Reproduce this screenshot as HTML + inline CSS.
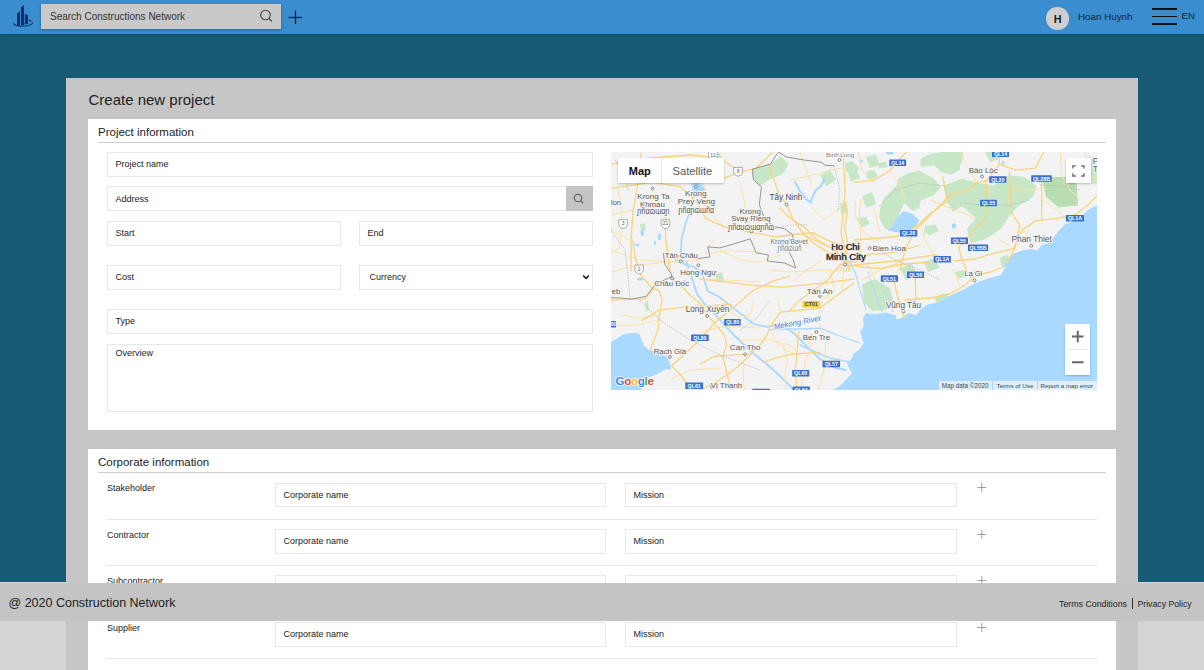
<!DOCTYPE html>
<html><head><meta charset="utf-8">
<style>
*{box-sizing:border-box;margin:0;padding:0}
html,body{width:1204px;height:670px;overflow:hidden}
body{position:relative;background:#d5d5d5;font-family:"Liberation Sans",sans-serif;color:#222}
.abs{position:absolute}
#teal{left:0;top:0;width:1204px;height:582px;background:#175a73}
#hdr{left:0;top:0;width:1204px;height:34px;background:#3a8ed0;box-shadow:0 1px 2px rgba(0,0,0,.18)}
#search{left:41px;top:4px;width:240px;height:25px;background:#c9c9c9;box-shadow:0 1px 3px rgba(0,0,0,.3)}
.t{position:absolute;white-space:nowrap;line-height:1}
#card{left:66px;top:78px;width:1072px;height:600px;background:#c6c6c6}
.sec{position:absolute;left:88px;width:1028px;background:#fff}
.inp{position:absolute;border:1px solid #e8e8e8;background:#fff}
.hl{position:absolute;height:1px;background:#cfcfcf}
.sep{position:absolute;height:1px;background:#e6e6e6}
#footer{left:0;top:583px;width:1204px;height:38px;background:#c4c4c4}
</style></head>
<body>
<div id="teal" class="abs"></div>
<div id="card" class="abs"></div>

<!-- header -->
<div id="hdr" class="abs">
  <svg class="abs" style="left:8px;top:2px" width="30" height="30" viewBox="8 2 30 30">
    <path d="M17.2 13.2 L19.9 11.6 L19.9 25.3 L17.2 25.3 Z" fill="#0c2b69"/>
    <path d="M21 7.4 L23.9 5.1 L23.9 24.9 L21 24.9 Z" fill="#0c2b69"/>
    <path d="M24.8 14.1 L27.9 15.2 L27.9 24 L24.8 24.3 Z" fill="#0c2b69"/>
    <path d="M13.2 23.4 A9.8 3.5 0 0 0 32.6 22.6" fill="none" stroke="#12357a" stroke-width="1.2"/>
    <path d="M32.6 22.6 A9.8 3.5 0 0 0 28.8 20.2" fill="none" stroke="#12357a" stroke-width="0.8"/>
    <circle cx="29.8" cy="20.5" r="0.9" fill="#12357a"/>
  </svg>
</div>
<div id="search" class="abs"></div>
<div class="t" style="left:50px;top:12px;font-size:10px;color:#333">Search Constructions Network</div>
<svg class="abs" style="left:258px;top:8px" width="16" height="16" viewBox="0 0 16 16">
  <circle cx="7.5" cy="7" r="4.8" fill="none" stroke="#444" stroke-width="1.1"/>
  <line x1="11" y1="10.5" x2="13.8" y2="13.5" stroke="#444" stroke-width="1.1"/>
</svg>
<svg class="abs" style="left:286px;top:8px" width="18" height="18" viewBox="0 0 18 18">
  <line x1="2.5" y1="9.5" x2="16" y2="9.5" stroke="#101c33" stroke-width="1.3"/>
  <line x1="9.5" y1="2.5" x2="9.5" y2="16" stroke="#101c33" stroke-width="1.3"/>
</svg>
<div class="abs" style="left:1046px;top:7px;width:22.5px;height:22.5px;border-radius:50%;background:#cfcfcf"></div>
<div class="t" style="left:1053.7px;top:13.5px;font-size:10.8px;font-weight:bold;color:#1a1a1a">H</div>
<div class="t" style="left:1078px;top:12px;font-size:9.8px;color:#0f2236">Hoan Huynh</div>
<div class="abs" style="left:1152px;top:8px;width:25px;height:1.6px;background:#111"></div>
<div class="abs" style="left:1152px;top:15.5px;width:25px;height:1.6px;background:#111"></div>
<div class="abs" style="left:1152px;top:23.2px;width:25px;height:1.6px;background:#111"></div>
<div class="t" style="left:1181.5px;top:11px;font-size:9.6px;color:#0f2236">EN</div>

<!-- title -->
<div class="t" style="left:88.5px;top:92.3px;font-size:15px;color:#222">Create new project</div>

<!-- section 1 -->
<div class="sec" style="top:118.5px;height:311.5px"></div>

<div class="t" style="left:98px;top:126.5px;font-size:11.5px;color:#222">Project information</div>
<div class="hl" style="left:98px;top:142px;width:1008px"></div>
<div class="inp" style="left:107px;top:152px;width:486px;height:25px"></div>
<div class="t" style="left:115.5px;top:160px;font-size:9px">Project name</div>
<div class="inp" style="left:107px;top:186px;width:486px;height:25px"></div>
<div class="abs" style="left:566px;top:186px;width:27px;height:25px;background:#c4c4c4"></div>
<svg class="abs" style="left:571px;top:191px" width="16" height="16" viewBox="0 0 16 16">
  <circle cx="7" cy="7" r="3.8" fill="none" stroke="#555" stroke-width="1"/>
  <line x1="9.8" y1="9.8" x2="12.2" y2="12.2" stroke="#555" stroke-width="1.1"/>
</svg>
<div class="t" style="left:115.5px;top:194.5px;font-size:9px">Address</div>
<div class="inp" style="left:107px;top:221px;width:234px;height:25px"></div>
<div class="t" style="left:115.5px;top:229px;font-size:9px">Start</div>
<div class="inp" style="left:359px;top:221px;width:234px;height:25px"></div>
<div class="t" style="left:367.5px;top:229px;font-size:9px">End</div>
<div class="inp" style="left:107px;top:265px;width:234px;height:25px"></div>
<div class="t" style="left:115.5px;top:273px;font-size:9px">Cost</div>
<div class="inp" style="left:359px;top:265px;width:234px;height:25px"></div>
<div class="t" style="left:369.5px;top:273px;font-size:9px">Currency</div>
<svg class="abs" style="left:582px;top:273px" width="8" height="8" viewBox="0 0 8 8"><path d="M1.2 2.6 L4 5.4 L6.8 2.6" fill="none" stroke="#222" stroke-width="1.5"/></svg>
<div class="inp" style="left:107px;top:309px;width:486px;height:25px"></div>
<div class="t" style="left:115.5px;top:317px;font-size:9px">Type</div>
<div class="inp" style="left:107px;top:344px;width:486px;height:68px"></div>
<div class="t" style="left:115.5px;top:349px;font-size:9px">Overview</div>

<!-- map placeholder -->
<svg class="abs" style="left:611px;top:152px" width="486" height="238" viewBox="611 152 486 238">
<rect x="611" y="152" width="486" height="238" fill="#f3f3f3"/>
<ellipse cx="846" cy="266" rx="7" ry="6" fill="#e6e6e6"/>
<polygon points="920.6,158.7 931.4,153.3 960.0,152.0 960.0,169.5 951.6,174.8 942.2,172.2 934.1,165.4 920.6,166.8" fill="#c8e7c6"/>
<polygon points="880.3,208.5 884.4,197.7 896.5,185.6 897.8,178.9 907.2,173.5 919.3,170.8 934.1,178.9 940.8,187.0 934.1,195.0 920.6,200.4 919.3,208.5 912.6,211.1 904.5,203.1 901.8,208.5 897.8,216.5 899.1,221.9 891.1,230.0 884.4,228.6 879.0,216.5" fill="#c8e7c6"/>
<polygon points="845.0,163.0 852.0,161.0 859.0,168.0 855.0,175.0 846.0,172.0" fill="#c8e7c6"/>
<polygon points="867.0,171.0 874.0,170.0 878.0,176.0 872.0,180.0 866.0,178.0" fill="#c8e7c6"/>
<polygon points="877.0,163.0 886.0,162.0 888.0,167.0 879.0,168.0" fill="#c8e7c6"/>
<polygon points="840.0,203.0 847.0,204.0 848.0,212.0 841.0,214.0" fill="#c8e7c6"/>
<polygon points="857.0,218.0 866.0,217.0 870.0,224.0 862.0,227.0" fill="#c8e7c6"/>
<polygon points="925.0,226.0 935.0,224.6 939.0,231.0 930.0,235.3 924.0,232.0" fill="#c8e7c6"/>
<polygon points="950.0,196.0 958.0,195.0 960.0,207.0 953.0,212.0 949.0,205.0" fill="#c8e7c6"/>
<polygon points="943.6,185.8 961.5,178.7 975.8,182.3 993.8,185.8 1008.0,175.0 1024.0,177.0 1036.8,185.8 1033.2,196.6 1017.0,207.3 1008.0,218.0 1001.0,228.9 984.8,239.6 970.5,243.2 966.9,228.9 975.8,218.0 963.3,207.3 947.2,203.8" fill="#c8e7c6"/>
<polygon points="940.0,152.0 963.3,152.0 961.5,164.3 947.2,173.3 940.0,171.5" fill="#c8e7c6"/>
<polygon points="985.0,152.0 1000.0,152.0 998.0,160.0 990.0,162.0" fill="#c8e7c6"/>
<polygon points="1005.0,185.0 1020.0,180.0 1030.0,190.0 1020.0,200.0 1008.0,198.0" fill="#c8e7c6"/>
<polygon points="1080.0,160.0 1090.0,156.0 1097.0,165.0 1097.0,185.0 1088.0,182.0" fill="#c8e7c6"/>
<polygon points="752.3,169.2 770.4,164.1 780.5,156.0 788.6,164.1 782.5,174.2 768.4,180.3 760.3,186.3 753.3,179.2" fill="#c8e7c6"/>
<polygon points="848.0,172.0 856.0,168.0 860.0,178.0 851.0,182.0" fill="#c8e7c6"/>
<polygon points="862.0,196.0 872.0,192.0 876.0,204.0 866.0,208.0" fill="#c8e7c6"/>
<polygon points="820.0,175.0 830.0,170.0 836.0,180.0 826.0,186.0" fill="#c8e7c6"/>
<polygon points="866.0,157.0 876.0,155.0 880.0,165.0 870.0,168.0" fill="#c8e7c6"/>
<polygon points="862.0,284.0 875.0,279.0 890.0,288.0 894.0,303.0 886.0,310.0 872.0,311.0 864.0,302.0" fill="#c8e7c6"/>
<polygon points="934.5,297.0 944.0,293.5 950.0,297.0 944.0,302.0 936.0,302.0" fill="#c8e7c6"/>
<polygon points="955.0,272.0 965.0,270.0 968.0,276.0 958.0,279.0" fill="#c8e7c6"/>
<polygon points="900.0,268.0 912.0,264.0 918.0,276.0 906.0,280.0" fill="#c8e7c6"/>
<polygon points="924.0,262.0 934.0,258.0 940.0,268.0 928.0,272.0" fill="#c8e7c6"/>
<polygon points="1000.0,258.0 1008.0,254.0 1010.0,266.0 1002.0,268.0" fill="#c8e7c6"/>
<polygon points="674.0,258.0 678.0,255.0 680.0,262.0 675.0,263.0" fill="#c8e7c6"/>
<polygon points="715.0,275.0 722.0,272.0 724.0,282.0 717.0,282.0" fill="#c8e7c6"/>
<polygon points="645.0,302.0 648.0,300.0 649.0,310.0 646.0,311.0" fill="#c8e7c6"/>
<polygon points="714.0,155.0 720.0,153.0 722.0,160.0 716.0,161.0" fill="#c8e7c6"/>
<polygon points="640.0,224.0 645.0,223.0 646.0,230.0 641.0,231.0" fill="#c8e7c6"/>
<polygon points="1042.2,176.9 1076.2,176.9 1078.0,205.6 1058.3,207.3 1045.7,196.6" fill="#b9ddb2"/>
<polygon points="1097.0,205.4 1089.7,208.7 1084.7,212.8 1081.5,219.4 1071.6,221.9 1065.0,224.3 1058.5,230.9 1053.5,237.4 1048.6,243.2 1042.0,244.8 1037.1,250.6 1030.6,248.9 1022.4,250.6 1012.5,253.9 1007.6,260.4 1004.3,268.6 1001.0,275.2 987.9,278.5 976.4,282.6 968.2,286.7 964.9,289.1 951.3,294.9 939.7,301.7 928.0,304.6 920.3,309.5 916.4,315.3 908.6,313.3 900.9,318.2 896.0,319.2 896.0,315.3 885.4,312.4 875.7,314.3 866.0,313.3 863.0,318.2 863.6,326.8 860.2,331.8 863.6,343.5 858.6,350.2 853.5,353.5 851.9,358.6 846.9,363.6 851.9,373.6 843.5,382.0 838.5,387.0 833.0,390.0 1097.0,390.0" fill="#aad9ff"/>
<polygon points="611.0,342.0 614.5,340.3 622.0,335.0 628.8,333.2 636.0,333.0 639.3,334.0 643.9,345.7 648.5,349.4 654.0,351.3 660.6,353.1 667.0,356.9 670.7,365.2 670.5,370.0 666.0,369.0 659.0,373.0 652.2,376.3 646.7,378.1 642.0,385.6 641.1,390.0 611.0,390.0" fill="#aad9ff"/>
<polygon points="896.5,217.9 903.2,211.1 912.6,213.8 919.3,220.5 915.3,227.3 907.2,231.3 896.5,232.6 887.0,230.0 893.8,225.9" fill="#aad9ff"/>
<polyline points="794.7,181.3 800.7,192.4 806.0,199.0 810.8,202.5 812.8,196.4 816.0,190.0 820.9,186.3 824.9,178.2" fill="none" stroke="#aad9ff" stroke-width="2.2" stroke-linejoin="round"/>
<polyline points="806.0,199.0 803.0,196.0" fill="none" stroke="#aad9ff" stroke-width="1.5"/>
<polygon points="691.0,183.0 698.0,180.0 705.0,189.0 702.0,197.0 694.0,196.0" fill="#aad9ff"/>
<ellipse cx="642.3" cy="232.7" rx="1.8" ry="3.5" fill="#aad9ff"/>
<ellipse cx="659.4" cy="236.8" rx="1.6" ry="3.5" fill="#aad9ff"/>
<ellipse cx="637.2" cy="244.8" rx="2.5" ry="1.4" fill="#aad9ff"/>
<ellipse cx="861" cy="161" rx="2" ry="1.5" fill="#aad9ff"/>
<ellipse cx="1003" cy="163" rx="1.5" ry="2" fill="#aad9ff"/>
<ellipse cx="640" cy="279" rx="3" ry="1.5" fill="#aad9ff"/>
<ellipse cx="655" cy="243" rx="1.2" ry="2.5" fill="#aad9ff"/>
<ellipse cx="954" cy="226" rx="2.2" ry="2.8" fill="#aad9ff"/>
<ellipse cx="1042" cy="205" rx="1" ry="1.5" fill="#aad9ff"/>
<ellipse cx="890" cy="153" rx="4" ry="1.5" fill="#aad9ff"/>
<polyline points="691.7,165.0 692.5,182.3 694.0,192.4 691.7,208.5 685.7,222.6 681.6,238.8 680.9,252.0 683.6,264.2 694.3,266.9 702.4,275.0 707.8,291.1 718.5,296.5 733.6,308.1 753.8,324.2 767.2,326.9 780.6,324.2 794.1,333.6 807.5,347.0 820.0,359.1 835.0,368.0 846.0,370.0" fill="none" stroke="#aad9ff" stroke-width="1.8" stroke-linejoin="round" stroke-linecap="round"/>
<polyline points="686.3,261.5 697.0,293.8 705.1,304.5 715.8,315.3 733.6,334.9 753.8,353.8 767.2,364.5 780.6,376.6 791.4,387.4 794.0,390.0" fill="none" stroke="#aad9ff" stroke-width="2.0" stroke-linejoin="round" stroke-linecap="round"/>
<polyline points="769.9,329.6 800.0,329.0 820.0,328.2 840.0,336.0 860.0,343.0" fill="none" stroke="#aad9ff" stroke-width="1.3" stroke-linejoin="round" stroke-linecap="round"/>
<polyline points="800.0,345.0 815.0,352.0 830.0,358.0 850.0,362.0" fill="none" stroke="#aad9ff" stroke-width="1.4" stroke-linejoin="round" stroke-linecap="round"/>
<polyline points="850.0,262.0 856.0,275.0 860.0,290.0 866.0,310.0" fill="none" stroke="#aad9ff" stroke-width="1.1" stroke-linejoin="round" stroke-linecap="round"/>
<polyline points="868.0,272.0 872.0,285.0 878.0,300.0 882.0,312.0" fill="none" stroke="#aad9ff" stroke-width="0.9" stroke-linejoin="round" stroke-linecap="round"/>
<polyline points="884.0,290.0 890.0,300.0 893.0,312.0" fill="none" stroke="#aad9ff" stroke-width="0.9" stroke-linejoin="round" stroke-linecap="round"/>
<polyline points="615.0,160.0 625.0,175.0 628.0,190.0" fill="none" stroke="#aad9ff" stroke-width="1.0" stroke-linejoin="round" stroke-linecap="round"/>
<polyline points="611.0,253.4 619.1,248.1 620.4,240.0 622.0,210.0 618.0,190.0" fill="none" stroke="#fbe2a6" stroke-width="1.0" stroke-linejoin="round" stroke-linecap="round"/>
<polyline points="611.0,272.3 628.5,266.9 637.9,265.5 665.0,262.0 681.0,261.0" fill="none" stroke="#fbe2a6" stroke-width="1.0" stroke-linejoin="round" stroke-linecap="round"/>
<polyline points="668.8,248.1 670.1,266.9 672.2,278.3" fill="none" stroke="#fbe2a6" stroke-width="1.0" stroke-linejoin="round" stroke-linecap="round"/>
<polyline points="611.0,326.0 637.9,324.7 660.0,320.0" fill="none" stroke="#fbe2a6" stroke-width="1.0" stroke-linejoin="round" stroke-linecap="round"/>
<polyline points="701.0,279.0 731.0,280.3 760.0,282.0" fill="none" stroke="#fbe2a6" stroke-width="1.0" stroke-linejoin="round" stroke-linecap="round"/>
<polyline points="705.1,253.4 731.0,250.8 760.0,252.0" fill="none" stroke="#fbe2a6" stroke-width="1.0" stroke-linejoin="round" stroke-linecap="round"/>
<polyline points="713.2,240.0 707.8,248.1" fill="none" stroke="#fbe2a6" stroke-width="1.0" stroke-linejoin="round" stroke-linecap="round"/>
<polyline points="724.2,300.0 726.9,310.8 740.3,317.5 751.1,313.4 753.8,300.0" fill="none" stroke="#fbe2a6" stroke-width="1.0" stroke-linejoin="round" stroke-linecap="round"/>
<polyline points="778.0,300.0 780.6,312.1" fill="none" stroke="#fbe2a6" stroke-width="1.0" stroke-linejoin="round" stroke-linecap="round"/>
<polyline points="772.6,333.6 778.0,344.4 787.4,351.1 794.1,353.8" fill="none" stroke="#fbe2a6" stroke-width="1.0" stroke-linejoin="round" stroke-linecap="round"/>
<polyline points="783.3,344.4 787.4,360.5 784.7,375.3 786.0,390.0" fill="none" stroke="#fbe2a6" stroke-width="1.0" stroke-linejoin="round" stroke-linecap="round"/>
<polyline points="811.6,333.6 810.2,348.4 804.8,361.8 803.5,375.3 800.0,390.0" fill="none" stroke="#fbe2a6" stroke-width="1.0" stroke-linejoin="round" stroke-linecap="round"/>
<polyline points="744.4,364.5 743.0,375.3 744.4,390.0" fill="none" stroke="#fbe2a6" stroke-width="1.0" stroke-linejoin="round" stroke-linecap="round"/>
<polyline points="700.0,332.3 721.5,326.9 740.3,326.9 760.5,328.2" fill="none" stroke="#fbe2a6" stroke-width="1.0" stroke-linejoin="round" stroke-linecap="round"/>
<polyline points="812.3,208.0 824.4,220.2 839.1,208.0 847.2,202.7" fill="none" stroke="#fbe2a6" stroke-width="1.0" stroke-linejoin="round" stroke-linecap="round"/>
<polyline points="860.6,200.0 859.3,216.1 860.6,233.6 860.6,257.8" fill="none" stroke="#fbe2a6" stroke-width="1.0" stroke-linejoin="round" stroke-linecap="round"/>
<polyline points="855.3,202.7 855.3,216.1 866.0,235.0 880.0,240.0" fill="none" stroke="#fbe2a6" stroke-width="1.0" stroke-linejoin="round" stroke-linecap="round"/>
<polyline points="820.3,261.8 806.9,269.9 793.4,280.6" fill="none" stroke="#fbe2a6" stroke-width="1.0" stroke-linejoin="round" stroke-linecap="round"/>
<polyline points="841.8,290.0 843.0,275.0 846.0,265.0" fill="none" stroke="#fbe2a6" stroke-width="1.0" stroke-linejoin="round" stroke-linecap="round"/>
<polyline points="830.0,271.0 835.0,290.0 822.0,300.0 818.0,320.0 826.0,340.0 824.0,370.0 818.0,390.0" fill="none" stroke="#fbe2a6" stroke-width="1.0" stroke-linejoin="round" stroke-linecap="round"/>
<polyline points="862.0,280.0 880.0,270.0 900.0,262.0" fill="none" stroke="#fbe2a6" stroke-width="1.0" stroke-linejoin="round" stroke-linecap="round"/>
<polyline points="860.0,255.0 870.0,268.0 875.0,280.0" fill="none" stroke="#fbe2a6" stroke-width="1.0" stroke-linejoin="round" stroke-linecap="round"/>
<polyline points="740.0,340.0 770.0,340.0 790.0,345.0 800.0,355.0" fill="none" stroke="#fbe2a6" stroke-width="1.0" stroke-linejoin="round" stroke-linecap="round"/>
<polyline points="610.0,250.0 640.0,260.0 670.0,262.0 700.0,260.0" fill="none" stroke="#fbe2a6" stroke-width="1.0" stroke-linejoin="round" stroke-linecap="round"/>
<polyline points="700.0,170.0 705.0,190.0 712.0,215.0 724.0,226.7" fill="none" stroke="#fbe2a6" stroke-width="1.0" stroke-linejoin="round" stroke-linecap="round"/>
<polyline points="650.0,200.0 660.0,210.0 665.5,212.5" fill="none" stroke="#fbe2a6" stroke-width="1.0" stroke-linejoin="round" stroke-linecap="round"/>
<polyline points="611.0,215.0 625.0,212.0 633.0,210.5" fill="none" stroke="#fbe2a6" stroke-width="1.0" stroke-linejoin="round" stroke-linecap="round"/>
<polyline points="741.0,185.0 745.0,205.0 744.0,230.0" fill="none" stroke="#fbe2a6" stroke-width="1.0" stroke-linejoin="round" stroke-linecap="round"/>
<polyline points="720.0,250.0 740.0,260.0 760.0,262.0 780.0,255.0" fill="none" stroke="#fbe2a6" stroke-width="1.0" stroke-linejoin="round" stroke-linecap="round"/>
<polyline points="770.0,270.0 790.0,272.0 820.0,270.0 849.0,271.0" fill="none" stroke="#fbe2a6" stroke-width="1.0" stroke-linejoin="round" stroke-linecap="round"/>
<polyline points="790.0,180.0 810.0,176.0 830.0,170.0 843.0,168.0" fill="none" stroke="#fbe2a6" stroke-width="1.0" stroke-linejoin="round" stroke-linecap="round"/>
<polyline points="800.0,152.0 806.0,170.0 812.0,185.0" fill="none" stroke="#fbe2a6" stroke-width="1.0" stroke-linejoin="round" stroke-linecap="round"/>
<polyline points="858.0,152.0 862.0,170.0 874.0,180.0" fill="none" stroke="#fbe2a6" stroke-width="1.0" stroke-linejoin="round" stroke-linecap="round"/>
<polyline points="890.0,170.0 900.0,185.0 905.0,200.0" fill="none" stroke="#fbe2a6" stroke-width="1.0" stroke-linejoin="round" stroke-linecap="round"/>
<polyline points="874.0,210.0 880.0,232.0" fill="none" stroke="#fbe2a6" stroke-width="1.0" stroke-linejoin="round" stroke-linecap="round"/>
<polyline points="920.0,221.0 925.0,240.0 934.0,255.0" fill="none" stroke="#fbe2a6" stroke-width="1.0" stroke-linejoin="round" stroke-linecap="round"/>
<polyline points="930.0,200.0 955.0,210.0 975.0,218.0" fill="none" stroke="#fbe2a6" stroke-width="1.0" stroke-linejoin="round" stroke-linecap="round"/>
<polyline points="1009.0,188.0 1030.0,190.0 1041.0,188.0" fill="none" stroke="#fbe2a6" stroke-width="1.0" stroke-linejoin="round" stroke-linecap="round"/>
<polyline points="1060.0,152.0 1062.0,175.0 1070.0,190.0 1080.0,200.0" fill="none" stroke="#fbe2a6" stroke-width="1.0" stroke-linejoin="round" stroke-linecap="round"/>
<polyline points="1085.0,152.0 1090.0,175.0 1097.0,180.0" fill="none" stroke="#fbe2a6" stroke-width="1.0" stroke-linejoin="round" stroke-linecap="round"/>
<polyline points="1041.7,200.0 1060.0,212.0 1066.0,220.0" fill="none" stroke="#fbe2a6" stroke-width="1.0" stroke-linejoin="round" stroke-linecap="round"/>
<polyline points="960.0,152.0 966.0,165.0 977.0,182.0" fill="none" stroke="#fbe2a6" stroke-width="1.0" stroke-linejoin="round" stroke-linecap="round"/>
<polyline points="1020.0,225.0 1030.0,240.0 1031.0,246.0" fill="none" stroke="#fbe2a6" stroke-width="1.0" stroke-linejoin="round" stroke-linecap="round"/>
<polyline points="670.0,380.0 690.0,370.0 720.0,368.0" fill="none" stroke="#fbe2a6" stroke-width="1.0" stroke-linejoin="round" stroke-linecap="round"/>
<polyline points="620.0,315.0 640.0,318.0 660.0,315.0" fill="none" stroke="#fbe2a6" stroke-width="1.0" stroke-linejoin="round" stroke-linecap="round"/>
<polyline points="611.0,230.0 620.0,235.0 628.0,240.0" fill="none" stroke="#fbe2a6" stroke-width="1.0" stroke-linejoin="round" stroke-linecap="round"/>
<polyline points="1000.0,240.0 1010.0,246.0" fill="none" stroke="#fbe2a6" stroke-width="1.0" stroke-linejoin="round" stroke-linecap="round"/>
<polyline points="953.0,270.0 960.0,285.0" fill="none" stroke="#fbe2a6" stroke-width="1.0" stroke-linejoin="round" stroke-linecap="round"/>
<polyline points="611.0,188.3 637.2,184.3 651.4,182.3 679.6,186.3 695.8,200.4 705.9,218.6 724.0,226.7 752.3,232.7 776.5,236.8 792.6,234.7 812.8,232.7 829.0,240.8 845.1,246.9 856.0,250.0" fill="none" stroke="#f8d47c" stroke-width="1.3" stroke-linejoin="round" stroke-linecap="round"/>
<polyline points="631.2,271.0 631.2,236.8 633.2,210.5 637.2,188.3 641.3,152.0" fill="none" stroke="#f8d47c" stroke-width="1.3" stroke-linejoin="round" stroke-linecap="round"/>
<polyline points="665.5,212.5 665.5,236.8 669.5,271.0" fill="none" stroke="#f8d47c" stroke-width="1.3" stroke-linejoin="round" stroke-linecap="round"/>
<polyline points="724.0,178.2 740.2,172.2 756.3,168.1 772.5,152.0" fill="none" stroke="#f8d47c" stroke-width="1.3" stroke-linejoin="round" stroke-linecap="round"/>
<polyline points="611.0,164.1 650.0,158.0 690.0,155.0 720.0,158.0 740.0,172.0" fill="none" stroke="#f8d47c" stroke-width="1.3" stroke-linejoin="round" stroke-linecap="round"/>
<polyline points="768.4,164.1 778.5,192.4 786.6,204.5 792.6,218.6 802.7,232.7 812.8,242.8 829.0,252.9 843.1,261.0 856.0,262.0" fill="none" stroke="#f8d47c" stroke-width="1.3" stroke-linejoin="round" stroke-linecap="round"/>
<polyline points="843.1,152.0 845.1,192.4 841.1,232.7 849.1,271.0" fill="none" stroke="#f8d47c" stroke-width="1.3" stroke-linejoin="round" stroke-linecap="round"/>
<polyline points="854.0,240.0 880.0,238.0 896.0,236.5 907.0,233.5 917.0,226.0 930.0,214.0 944.8,203.0 950.9,194.4 967.0,190.3 977.1,182.3 987.2,180.3 999.3,164.1 999.3,152.0" fill="none" stroke="#f8d47c" stroke-width="1.3" stroke-linejoin="round" stroke-linecap="round"/>
<polyline points="854.0,182.3 874.2,180.3 890.3,170.2 902.4,156.0 906.5,152.0" fill="none" stroke="#f8d47c" stroke-width="1.3" stroke-linejoin="round" stroke-linecap="round"/>
<polyline points="985.2,180.3 987.2,196.4 985.2,218.6 975.1,228.7 967.0,238.8 958.9,246.9 961.0,256.9 967.0,271.0" fill="none" stroke="#f8d47c" stroke-width="1.3" stroke-linejoin="round" stroke-linecap="round"/>
<polyline points="854.0,265.0 894.4,261.0 934.7,254.9 954.9,261.0 975.1,259.0 995.3,252.9 1013.4,248.9 1021.5,230.7 1035.6,220.6 1055.8,218.6 1076.0,214.6 1088.1,204.5 1097.0,196.0" fill="none" stroke="#f8d47c" stroke-width="1.3" stroke-linejoin="round" stroke-linecap="round"/>
<polyline points="1009.4,172.2 1011.4,212.5 1019.5,224.7 1015.5,246.9 1008.0,262.0" fill="none" stroke="#f8d47c" stroke-width="1.3" stroke-linejoin="round" stroke-linecap="round"/>
<polyline points="1041.7,178.2 1041.7,220.6" fill="none" stroke="#f8d47c" stroke-width="1.3" stroke-linejoin="round" stroke-linecap="round"/>
<polyline points="999.3,164.1 1015.5,170.2 1035.6,168.1 1043.7,152.0" fill="none" stroke="#f8d47c" stroke-width="1.3" stroke-linejoin="round" stroke-linecap="round"/>
<polyline points="942.8,176.2 946.8,198.4 930.7,214.6 914.5,230.7 905.0,250.0 900.0,270.0" fill="none" stroke="#f8d47c" stroke-width="1.3" stroke-linejoin="round" stroke-linecap="round"/>
<polyline points="671.5,365.9 695.8,343.7 716.0,321.5 736.1,305.3 752.3,291.2 772.5,281.1 790.0,276.0" fill="none" stroke="#f8d47c" stroke-width="1.3" stroke-linejoin="round" stroke-linecap="round"/>
<polyline points="854.0,283.1 820.0,308.1 794.1,310.8 780.6,312.1 769.9,326.9 767.2,334.9 760.5,344.4 751.1,353.8 740.3,364.5 726.9,375.3 713.4,383.3 700.0,390.0" fill="none" stroke="#f8d47c" stroke-width="1.3" stroke-linejoin="round" stroke-linecap="round"/>
<polyline points="671.5,365.9 681.6,376.0 691.7,390.0" fill="none" stroke="#f8d47c" stroke-width="1.3" stroke-linejoin="round" stroke-linecap="round"/>
<polyline points="798.7,331.5 796.8,353.8 795.4,369.9 796.8,390.0" fill="none" stroke="#f8d47c" stroke-width="1.3" stroke-linejoin="round" stroke-linecap="round"/>
<polyline points="699.8,279.1 752.3,285.1 782.5,287.1 822.9,283.1 854.0,279.1" fill="none" stroke="#f8d47c" stroke-width="1.3" stroke-linejoin="round" stroke-linecap="round"/>
<polyline points="780.0,208.0 789.4,217.5 804.2,226.9 816.3,239.0 829.7,247.0 840.0,255.0 846.0,265.0" fill="none" stroke="#f8d47c" stroke-width="1.3" stroke-linejoin="round" stroke-linecap="round"/>
<polyline points="780.0,236.3 801.5,233.6 820.3,243.0 837.8,251.0" fill="none" stroke="#f8d47c" stroke-width="1.3" stroke-linejoin="round" stroke-linecap="round"/>
<polyline points="844.5,200.0 847.2,213.4 844.5,226.9 847.2,240.3 846.0,265.0" fill="none" stroke="#f8d47c" stroke-width="1.3" stroke-linejoin="round" stroke-linecap="round"/>
<polyline points="846.0,265.0 840.5,264.5 827.0,280.6 813.6,290.0 800.0,300.0 790.0,310.0" fill="none" stroke="#f8d47c" stroke-width="1.3" stroke-linejoin="round" stroke-linecap="round"/>
<polyline points="846.0,265.0 863.3,267.2 880.8,268.5 900.0,264.5 930.0,262.0" fill="none" stroke="#f8d47c" stroke-width="1.3" stroke-linejoin="round" stroke-linecap="round"/>
<polyline points="860.6,257.8 871.4,253.8 882.2,253.8 900.0,251.1 920.0,245.0" fill="none" stroke="#f8d47c" stroke-width="1.3" stroke-linejoin="round" stroke-linecap="round"/>
<polyline points="632.5,240.0 635.2,257.5 640.6,275.0 651.3,287.0 659.4,291.1" fill="none" stroke="#f8d47c" stroke-width="1.3" stroke-linejoin="round" stroke-linecap="round"/>
<polyline points="672.2,278.3 682.2,287.0 691.6,296.5 699.7,303.2 707.8,315.3 724.2,334.9 726.9,344.4 722.8,356.5 725.5,367.2 730.9,390.0" fill="none" stroke="#f8d47c" stroke-width="1.3" stroke-linejoin="round" stroke-linecap="round"/>
<polyline points="611.0,300.5 621.8,299.1 644.6,299.1 654.0,288.4" fill="none" stroke="#f8d47c" stroke-width="1.3" stroke-linejoin="round" stroke-linecap="round"/>
<polyline points="659.4,291.1 662.1,300.5 659.4,315.3 658.0,330.0 650.3,349.4" fill="none" stroke="#f8d47c" stroke-width="1.3" stroke-linejoin="round" stroke-linecap="round"/>
<polyline points="641.9,320.6 659.4,309.9 684.9,307.2 705.1,305.9 731.0,304.5" fill="none" stroke="#f8d47c" stroke-width="1.3" stroke-linejoin="round" stroke-linecap="round"/>
<polyline points="700.0,364.5 713.4,356.5 732.3,355.1 751.1,353.8" fill="none" stroke="#f8d47c" stroke-width="1.3" stroke-linejoin="round" stroke-linecap="round"/>
<polyline points="764.5,361.8 775.3,357.8 794.1,353.8 820.0,352.4" fill="none" stroke="#f8d47c" stroke-width="1.3" stroke-linejoin="round" stroke-linecap="round"/>
<polyline points="905.0,300.0 930.0,298.0 950.0,294.0 965.0,285.0 975.0,276.0 990.0,272.0 1001.0,268.0" fill="none" stroke="#f8d47c" stroke-width="1.3" stroke-linejoin="round" stroke-linecap="round"/>
<polyline points="893.0,276.0 896.0,290.0 900.0,305.0 905.0,318.0" fill="none" stroke="#f8d47c" stroke-width="1.3" stroke-linejoin="round" stroke-linecap="round"/>
<polyline points="915.0,270.0 916.0,300.0" fill="none" stroke="#f8d47c" stroke-width="1.3" stroke-linejoin="round" stroke-linecap="round"/>
<polyline points="778.5,152.0 770.4,164.1 752.3,169.2 753.3,179.2 761.4,187.3 759.3,204.5 764.4,218.6 774.5,226.7 784.6,228.7 792.6,234.7 793.6,242.8 788.6,250.9 793.6,261.0 795.7,268.0" fill="none" stroke="#8a8a8a" stroke-width="0.9" stroke-linejoin="round"/>
<polyline points="795.7,268.0 784.6,263.0 767.4,261.0 768.4,254.9 756.3,252.9 750.3,238.8 734.1,243.8 720.0,247.9 707.9,246.9 709.9,256.9 697.0,258.8 663.4,253.4 664.8,264.2 670.1,272.3 672.2,276.3 655.4,284.4 646.0,296.5 631.2,299.1 619.1,297.8 611.0,297.8" fill="none" stroke="#8a8a8a" stroke-width="0.9" stroke-linejoin="round"/>
<polyline points="778.5,152.0 786.6,157.0 804.7,160.1 820.9,162.1 824.9,165.1 835.0,166.0" fill="none" stroke="#8a8a8a" stroke-width="0.9" stroke-linejoin="round"/>
<polyline points="880.0,206.0 895.0,190.0 920.0,183.0 945.0,186.0" fill="none" stroke="#aaaaaa" stroke-width="0.7" stroke-dasharray="1.3,1.3"/>
<polyline points="960.0,203.0 985.0,205.0 1010.0,205.0 1030.0,200.0" fill="none" stroke="#aaaaaa" stroke-width="0.7" stroke-dasharray="1.3,1.3"/>
<polyline points="1040.0,185.0 1060.0,186.0 1080.0,190.0" fill="none" stroke="#aaaaaa" stroke-width="0.7" stroke-dasharray="1.3,1.3"/>
<polyline points="640.0,300.0 660.0,320.0 690.0,340.0 720.0,355.0 760.0,370.0" fill="none" stroke="#aaaaaa" stroke-width="0.7" stroke-dasharray="1.3,1.3"/>
<polyline points="611.0,230.0 625.0,250.0 628.0,275.0 630.0,300.0" fill="none" stroke="#aaaaaa" stroke-width="0.7" stroke-dasharray="1.3,1.3"/>
<polyline points="740.0,330.0 755.0,320.0 770.0,300.0" fill="none" stroke="#aaaaaa" stroke-width="0.7" stroke-dasharray="1.3,1.3"/>
<polyline points="770.0,230.0 790.0,225.0 808.0,225.0" fill="none" stroke="#aaaaaa" stroke-width="0.7" stroke-dasharray="1.3,1.3"/>
<polyline points="835.0,170.0 840.0,190.0 838.0,210.0" fill="none" stroke="#aaaaaa" stroke-width="0.7" stroke-dasharray="1.3,1.3"/>
<polyline points="880.0,250.0 895.0,260.0 920.0,270.0 940.0,280.0" fill="none" stroke="#aaaaaa" stroke-width="0.7" stroke-dasharray="1.3,1.3"/>
<rect x="889.3" y="159.5" width="16.8" height="6.5" fill="#3a6fcc" rx="0.6"/>
<text x="897.7" y="164.8" font-family="Liberation Sans" font-weight="bold" font-size="5.3" fill="#fff" text-anchor="middle">QL14</text>
<rect x="989.2" y="176.2" width="17.2" height="6.5" fill="#3a6fcc" rx="0.6"/>
<text x="997.8" y="181.5" font-family="Liberation Sans" font-weight="bold" font-size="5.3" fill="#fff" text-anchor="middle">QL20</text>
<rect x="1031.2" y="175.2" width="20.6" height="6.5" fill="#3a6fcc" rx="0.6"/>
<text x="1041.5" y="180.5" font-family="Liberation Sans" font-weight="bold" font-size="5.3" fill="#fff" text-anchor="middle">QL28B</text>
<rect x="980.1" y="199.8" width="16.8" height="6.5" fill="#3a6fcc" rx="0.6"/>
<text x="988.5" y="205.1" font-family="Liberation Sans" font-weight="bold" font-size="5.3" fill="#fff" text-anchor="middle">QL55</text>
<rect x="1065.9" y="215.0" width="18.2" height="6.5" fill="#3a6fcc" rx="0.6"/>
<text x="1075.0" y="220.3" font-family="Liberation Sans" font-weight="bold" font-size="5.3" fill="#fff" text-anchor="middle">QL1A</text>
<rect x="900" y="230.0" width="17.2" height="6.5" fill="#3a6fcc" rx="0.6"/>
<text x="908.6" y="235.3" font-family="Liberation Sans" font-weight="bold" font-size="5.3" fill="#fff" text-anchor="middle">QL20</text>
<rect x="950.9" y="237.4" width="17.1" height="6.5" fill="#3a6fcc" rx="0.6"/>
<text x="959.4" y="242.7" font-family="Liberation Sans" font-weight="bold" font-size="5.3" fill="#fff" text-anchor="middle">QL55</text>
<rect x="968" y="244.5" width="20.2" height="6.5" fill="#3a6fcc" rx="0.6"/>
<text x="978.1" y="249.8" font-family="Liberation Sans" font-weight="bold" font-size="5.3" fill="#fff" text-anchor="middle">QL55B</text>
<rect x="933.7" y="256.0" width="17.2" height="6.5" fill="#3a6fcc" rx="0.6"/>
<text x="942.3" y="261.3" font-family="Liberation Sans" font-weight="bold" font-size="5.3" fill="#fff" text-anchor="middle">QL1A</text>
<rect x="880.8" y="275.3" width="17.2" height="6.5" fill="#3a6fcc" rx="0.6"/>
<text x="889.4" y="280.6" font-family="Liberation Sans" font-weight="bold" font-size="5.3" fill="#fff" text-anchor="middle">QL51</text>
<rect x="907" y="271.5" width="17" height="6.5" fill="#3a6fcc" rx="0.6"/>
<text x="915.5" y="276.8" font-family="Liberation Sans" font-weight="bold" font-size="5.3" fill="#fff" text-anchor="middle">QL56</text>
<rect x="724.2" y="319" width="16.5" height="6.5" fill="#3a6fcc" rx="0.6"/>
<text x="732.5" y="324.3" font-family="Liberation Sans" font-weight="bold" font-size="5.3" fill="#fff" text-anchor="middle">QL80</text>
<rect x="691.1" y="334.6" width="17.6" height="6.5" fill="#3a6fcc" rx="0.6"/>
<text x="699.9" y="339.9" font-family="Liberation Sans" font-weight="bold" font-size="5.3" fill="#fff" text-anchor="middle">QL80</text>
<rect x="822.5" y="360.8" width="17.6" height="6.5" fill="#3a6fcc" rx="0.6"/>
<text x="831.3" y="366.1" font-family="Liberation Sans" font-weight="bold" font-size="5.3" fill="#fff" text-anchor="middle">QL57</text>
<rect x="792.2" y="370" width="17" height="6.5" fill="#3a6fcc" rx="0.6"/>
<text x="800.7" y="375.3" font-family="Liberation Sans" font-weight="bold" font-size="5.3" fill="#fff" text-anchor="middle">QL60</text>
<rect x="685.3" y="382.6" width="17.8" height="6.5" fill="#3a6fcc" rx="0.6"/>
<text x="694.2" y="387.9" font-family="Liberation Sans" font-weight="bold" font-size="5.3" fill="#fff" text-anchor="middle">QL61</text>
<rect x="792.6" y="386.5" width="17.2" height="6.5" fill="#3a6fcc" rx="0.6"/>
<text x="801.2" y="391.8" font-family="Liberation Sans" font-weight="bold" font-size="5.3" fill="#fff" text-anchor="middle">QL54</text>
<rect x="752.3" y="388.7" width="17.8" height="6.5" fill="#3a6fcc" rx="0.6"/>
<text x="761.2" y="394.0" font-family="Liberation Sans" font-weight="bold" font-size="5.3" fill="#fff" text-anchor="middle">QL1A</text>
<rect x="992" y="150.5" width="17" height="6.5" fill="#3a6fcc" rx="0.6"/>
<text x="1000.5" y="155.8" font-family="Liberation Sans" font-weight="bold" font-size="5.3" fill="#fff" text-anchor="middle">QL14</text>
<rect x="604" y="321" width="12" height="6.5" fill="#3a6fcc" rx="0.6"/>
<text x="610.0" y="326.3" font-family="Liberation Sans" font-weight="bold" font-size="5.3" fill="#fff" text-anchor="middle">QL80</text>
<rect x="802.5" y="301" width="17.5" height="6.6" fill="#f4d13b" rx="0.6"/>
<text x="811.2" y="306.3" font-family="Liberation Sans" font-weight="bold" font-size="5.3" fill="#444" text-anchor="middle">CT01</text>
<path d="M733.8000000000001,167.39999999999998 h8.6 v4.2 q0,3.6 -4.3,4.6 q-4.3,-1 -4.3,-4.6 z" fill="#fff" stroke="#777" stroke-width="0.6"/>
<text x="738.1" y="173.0" font-family="Liberation Sans" font-size="5" fill="#555" text-anchor="middle">8</text>
<path d="M618.8000000000001,219.79999999999998 h8.6 v4.2 q0,3.6 -4.3,4.6 q-4.3,-1 -4.3,-4.6 z" fill="#fff" stroke="#777" stroke-width="0.6"/>
<text x="623.1" y="225.4" font-family="Liberation Sans" font-size="5" fill="#555" text-anchor="middle">3</text>
<path d="M661.2,219.79999999999998 h8.6 v4.2 q0,3.6 -4.3,4.6 q-4.3,-1 -4.3,-4.6 z" fill="#fff" stroke="#777" stroke-width="0.6"/>
<text x="665.5" y="225.4" font-family="Liberation Sans" font-size="5" fill="#555" text-anchor="middle">21</text>
<path d="M708.6,151.2 h8.6 v4.2 q0,3.6 -4.3,4.6 q-4.3,-1 -4.3,-4.6 z" fill="#fff" stroke="#777" stroke-width="0.6"/>
<text x="712.9" y="156.8" font-family="Liberation Sans" font-size="5" fill="#555" text-anchor="middle">11</text>
<path d="M634.9000000000001,265.09999999999997 h8.6 v4.2 q0,3.6 -4.3,4.6 q-4.3,-1 -4.3,-4.6 z" fill="#fff" stroke="#777" stroke-width="0.6"/>
<text x="639.2" y="270.7" font-family="Liberation Sans" font-size="5" fill="#555" text-anchor="middle">2</text>
<circle cx="652.6" cy="188.5" r="1.4" fill="#fff" stroke="#555" stroke-width="0.7"/>
<circle cx="696" cy="186.6" r="1.4" fill="#fff" stroke="#555" stroke-width="0.7"/>
<circle cx="786.6" cy="204.5" r="1.4" fill="#fff" stroke="#555" stroke-width="0.7"/>
<circle cx="751.3" cy="231.5" r="1.4" fill="#fff" stroke="#555" stroke-width="0.7"/>
<circle cx="789.6" cy="240.5" r="1.4" fill="#fff" stroke="#555" stroke-width="0.7"/>
<circle cx="680.6" cy="261.5" r="1.4" fill="#fff" stroke="#555" stroke-width="0.7"/>
<circle cx="698.4" cy="265.3" r="1.4" fill="#fff" stroke="#555" stroke-width="0.7"/>
<circle cx="672.2" cy="278.3" r="1.4" fill="#fff" stroke="#555" stroke-width="0.7"/>
<circle cx="707.1" cy="316" r="1.4" fill="#fff" stroke="#555" stroke-width="0.7"/>
<circle cx="669.9" cy="357" r="1.4" fill="#fff" stroke="#555" stroke-width="0.7"/>
<circle cx="745" cy="354.4" r="1.4" fill="#fff" stroke="#555" stroke-width="0.7"/>
<circle cx="819.9" cy="296" r="1.4" fill="#fff" stroke="#555" stroke-width="0.7"/>
<circle cx="816.4" cy="332" r="1.4" fill="#fff" stroke="#555" stroke-width="0.7"/>
<circle cx="982" cy="176.5" r="1.4" fill="#fff" stroke="#555" stroke-width="0.7"/>
<circle cx="1031.4" cy="245.8" r="1.4" fill="#fff" stroke="#555" stroke-width="0.7"/>
<circle cx="869.8" cy="248.1" r="1.4" fill="#fff" stroke="#555" stroke-width="0.7"/>
<circle cx="974.5" cy="280.5" r="1.4" fill="#fff" stroke="#555" stroke-width="0.7"/>
<circle cx="903.5" cy="311.5" r="1.4" fill="#fff" stroke="#555" stroke-width="0.7"/>
<circle cx="845.2" cy="264.5" r="1.4" fill="#fff" stroke="#555" stroke-width="0.7"/>
<circle cx="839.5" cy="160" r="1.4" fill="#fff" stroke="#555" stroke-width="0.7"/>
<circle cx="712" cy="387" r="1.4" fill="#fff" stroke="#555" stroke-width="0.7"/>
<text x="653.4" y="198.8" font-family="Liberation Sans" font-size="8.1" font-weight="normal" fill="#5a5a5a" text-anchor="middle" stroke="#f4f4f4" stroke-width="1.8" paint-order="stroke">Krong Ta</text>
<text x="652.4" y="206.9" font-family="Liberation Sans" font-size="7.9" font-weight="normal" fill="#5a5a5a" text-anchor="middle" stroke="#f4f4f4" stroke-width="1.8" paint-order="stroke">Khmau</text>
<text x="637.3" y="214.2" font-family="Liberation Sans" font-size="8.6" fill="#5a5a5a" textLength="32" lengthAdjust="spacingAndGlyphs" stroke="#f4f4f4" stroke-width="1.8" paint-order="stroke">ɲñɑɷɯɑɲ</text>
<text x="695.8" y="196" font-family="Liberation Sans" font-size="8" font-weight="normal" fill="#5a5a5a" text-anchor="middle" stroke="#f4f4f4" stroke-width="1.8" paint-order="stroke">Krong</text>
<text x="696.3" y="204.1" font-family="Liberation Sans" font-size="8.08" font-weight="normal" fill="#5a5a5a" text-anchor="middle" stroke="#f4f4f4" stroke-width="1.8" paint-order="stroke">Prey Veng</text>
<text x="678.5" y="212.6" font-family="Liberation Sans" font-size="8.6" fill="#5a5a5a" textLength="35.5" lengthAdjust="spacingAndGlyphs" stroke="#f4f4f4" stroke-width="1.8" paint-order="stroke">ɲñɑɲɷɯñɑ</text>
<text x="785.9" y="200.4" font-family="Liberation Sans" font-size="8.2" font-weight="normal" fill="#4a4a4a" text-anchor="middle" stroke="#f4f4f4" stroke-width="1.8" paint-order="stroke">Tây Ninh</text>
<text x="750.3" y="213.6" font-family="Liberation Sans" font-size="8" font-weight="normal" fill="#5a5a5a" text-anchor="middle" stroke="#f4f4f4" stroke-width="1.8" paint-order="stroke">Krong</text>
<text x="750.8" y="221.2" font-family="Liberation Sans" font-size="7.7" font-weight="normal" fill="#5a5a5a" text-anchor="middle" stroke="#f4f4f4" stroke-width="1.8" paint-order="stroke">Svay Rieng</text>
<text x="728.2" y="229.8" font-family="Liberation Sans" font-size="8.6" fill="#5a5a5a" textLength="46" lengthAdjust="spacingAndGlyphs" stroke="#f4f4f4" stroke-width="1.8" paint-order="stroke">ɲñɑʊɷɯɑɲñɷ</text>
<text x="789.1" y="243.8" font-family="Liberation Sans" font-size="6.8" font-weight="normal" fill="#777" text-anchor="middle" stroke="#f4f4f4" stroke-width="1.8" paint-order="stroke">Krong Bavet</text>
<text x="777.6" y="251" font-family="Liberation Sans" font-size="8.6" fill="#888" textLength="24" lengthAdjust="spacingAndGlyphs" stroke="#f4f4f4" stroke-width="1.8" paint-order="stroke">ɲñɑɷɯñ</text>
<text x="681.3" y="257.5" font-family="Liberation Sans" font-size="7.5" font-weight="normal" fill="#5a5a5a" text-anchor="middle" stroke="#f4f4f4" stroke-width="1.8" paint-order="stroke">Tân Châu</text>
<text x="698.4" y="274.7" font-family="Liberation Sans" font-size="7.86" font-weight="normal" fill="#5a5a5a" text-anchor="middle" stroke="#f4f4f4" stroke-width="1.8" paint-order="stroke">Hồng Ngự</text>
<text x="671.7" y="286.4" font-family="Liberation Sans" font-size="7.8" font-weight="normal" fill="#5a5a5a" text-anchor="middle" stroke="#f4f4f4" stroke-width="1.8" paint-order="stroke">Châu Đốc</text>
<text x="707.5" y="311.9" font-family="Liberation Sans" font-size="8.18" font-weight="normal" fill="#5a5a5a" text-anchor="middle" stroke="#f4f4f4" stroke-width="1.8" paint-order="stroke">Long Xuyên</text>
<text x="669.9" y="353.7" font-family="Liberation Sans" font-size="7.72" font-weight="normal" fill="#5a5a5a" text-anchor="middle" stroke="#f4f4f4" stroke-width="1.8" paint-order="stroke">Rạch Giá</text>
<text x="745.2" y="350.4" font-family="Liberation Sans" font-size="8.04" font-weight="normal" fill="#5a5a5a" text-anchor="middle" stroke="#f4f4f4" stroke-width="1.8" paint-order="stroke">Can Tho</text>
<text x="819.6" y="293.6" font-family="Liberation Sans" font-size="8.07" font-weight="normal" fill="#5a5a5a" text-anchor="middle" stroke="#f4f4f4" stroke-width="1.8" paint-order="stroke">Tân An</text>
<text x="816.4" y="340" font-family="Liberation Sans" font-size="7.8" font-weight="normal" fill="#5a5a5a" text-anchor="middle" stroke="#f4f4f4" stroke-width="1.8" paint-order="stroke">Bến Tre</text>
<text x="726.5" y="388" font-family="Liberation Sans" font-size="7.9" font-weight="normal" fill="#5a5a5a" text-anchor="middle" stroke="#f4f4f4" stroke-width="1.8" paint-order="stroke">Vị Thanh</text>
<text x="840" y="157" font-family="Liberation Sans" font-size="6.2" font-weight="normal" fill="#888" text-anchor="middle" stroke="#f4f4f4" stroke-width="1.8" paint-order="stroke">Bình Long</text>
<text x="983.2" y="173.2" font-family="Liberation Sans" font-size="7.93" font-weight="normal" fill="#5a5a5a" text-anchor="middle" stroke="#f4f4f4" stroke-width="1.8" paint-order="stroke">Bảo Lộc</text>
<text x="1031.6" y="241.8" font-family="Liberation Sans" font-size="8.38" font-weight="normal" fill="#5a5a5a" text-anchor="middle" stroke="#f4f4f4" stroke-width="1.8" paint-order="stroke">Phan Thiet</text>
<text x="889.3" y="251.3" font-family="Liberation Sans" font-size="8.12" font-weight="normal" fill="#5a5a5a" text-anchor="middle" stroke="#f4f4f4" stroke-width="1.8" paint-order="stroke">Bien Hoa</text>
<text x="973.4" y="276" font-family="Liberation Sans" font-size="7.36" font-weight="normal" fill="#5a5a5a" text-anchor="middle" stroke="#f4f4f4" stroke-width="1.8" paint-order="stroke">La Gi</text>
<text x="903.5" y="308.3" font-family="Liberation Sans" font-size="8.17" font-weight="normal" fill="#5a5a5a" text-anchor="middle" stroke="#f4f4f4" stroke-width="1.8" paint-order="stroke">Vũng Tàu</text>
<text x="845.4" y="250" font-family="Liberation Sans" font-size="9.3" fill="#3a3a3a" text-anchor="middle" stroke="#f4f4f4" stroke-width="1.8" paint-order="stroke">Ho Chi</text>
<text x="845.4" y="250" font-family="Liberation Sans" font-size="9.3" fill="#3a3a3a" text-anchor="middle" stroke="#3a3a3a" stroke-width="0.35">Ho Chi</text>
<text x="845.9" y="259.8" font-family="Liberation Sans" font-size="9.5" fill="#3a3a3a" text-anchor="middle" stroke="#f4f4f4" stroke-width="1.8" paint-order="stroke">Minh City</text>
<text x="845.9" y="259.8" font-family="Liberation Sans" font-size="9.5" fill="#3a3a3a" text-anchor="middle" stroke="#3a3a3a" stroke-width="0.35">Minh City</text>
<text x="616" y="205" font-family="Liberation Sans" font-size="7.5" font-weight="normal" fill="#5a5a5a" text-anchor="middle" stroke="#f4f4f4" stroke-width="1.8" paint-order="stroke">lon</text>
<text x="1098" y="164" font-family="Liberation Sans" font-size="8.5" font-weight="normal" fill="#5a5a5a" text-anchor="middle" stroke="#f4f4f4" stroke-width="1.8" paint-order="stroke">Ph</text>
<text x="1098" y="172" font-family="Liberation Sans" font-size="8.5" font-weight="normal" fill="#5a5a5a" text-anchor="middle" stroke="#f4f4f4" stroke-width="1.8" paint-order="stroke">Th</text>
<text x="616" y="294.4" font-family="Liberation Sans" font-size="7.5" font-weight="normal" fill="#5a5a5a" text-anchor="middle" stroke="#f4f4f4" stroke-width="1.8" paint-order="stroke">eb</text>
<text x="798" y="325" font-family="Liberation Sans" font-style="italic" font-size="7.8" fill="#4f86d4" stroke="#f4f4f4" stroke-width="1.6" paint-order="stroke" text-anchor="middle" transform="rotate(-11 798 325)">Mekong River</text>
</svg>
<!-- map controls -->
<div class="abs" style="left:618px;top:158px;width:106px;height:25px;background:#fff;box-shadow:0 1px 2px rgba(0,0,0,.25)"></div>
<div class="abs" style="left:661px;top:158px;width:1px;height:25px;background:#e6e6e6"></div>
<div class="t" style="left:628.8px;top:166px;font-size:11px;font-weight:bold;color:#111">Map</div>
<div class="t" style="left:672.5px;top:166px;font-size:11.2px;color:#5a5a5a">Satellite</div>
<div class="abs" style="left:1066px;top:158px;width:24.5px;height:25px;background:#fff;box-shadow:0 1px 2px rgba(0,0,0,.25)"></div>
<svg class="abs" style="left:1066px;top:158px" width="25" height="25" viewBox="0 0 25 25"><path d="M6.9 10.6V7.9h2.9M15.1 7.9H18v2.7M18 15.3V18h-2.9M9.8 18H6.9v-2.7" fill="none" stroke="#666" stroke-width="1.3"/></svg>
<div class="abs" style="left:1065px;top:324.2px;width:25.2px;height:50.8px;background:#fff;box-shadow:0 1px 2px rgba(0,0,0,.22)"></div>
<div class="abs" style="left:1068.3px;top:349px;width:19px;height:1px;background:#e6e6e6"></div>
<svg class="abs" style="left:1065px;top:324.2px" width="26" height="51" viewBox="0 0 26 51"><path d="M7 12.5h11.5M12.75 6.7v11.6M7 38.3h11.5" fill="none" stroke="#666" stroke-width="2"/></svg>
<div class="abs" style="left:939px;top:381.3px;width:53px;height:8.7px;background:rgba(245,245,245,.72)"></div>
<div class="abs" style="left:993px;top:381.3px;width:44px;height:8.7px;background:rgba(245,245,245,.72)"></div>
<div class="abs" style="left:1038px;top:381.3px;width:59px;height:8.7px;background:rgba(245,245,245,.72)"></div>
<div class="t" style="left:941.8px;top:382.8px;font-size:6.3px;color:#444">Map data ©2020</div>
<div class="t" style="left:996.6px;top:382.8px;font-size:6.25px;color:#444">Terms of Use</div>
<div class="t" style="left:1040.5px;top:382.8px;font-size:6.2px;color:#444">Report a map error</div>
<svg class="abs" style="left:611px;top:370px" width="50" height="20" viewBox="611 370 50 20">
<text x="615.5" y="385" font-family="Liberation Sans" font-size="11.8" textLength="38.5" stroke="#fff" stroke-width="1.6" stroke-linejoin="round" paint-order="stroke" style="font-weight:bold"><tspan fill="#4285f4">G</tspan><tspan fill="#ea4335">o</tspan><tspan fill="#fbbc05">o</tspan><tspan fill="#4285f4">g</tspan><tspan fill="#34a853">l</tspan><tspan fill="#ea4335">e</tspan></text>
</svg>


<!-- section 2 -->
<div class="sec" style="top:449px;height:240px"></div>
<div class="t" style="left:98px;top:456.7px;font-size:11.5px;color:#222">Corporate information</div>
<div class="hl" style="left:98px;top:472px;width:1008px"></div>
<div class="t" style="left:107px;top:484.4px;font-size:9px">Stakeholder</div>
<div class="inp" style="left:275px;top:482.6px;width:331px;height:24.8px"></div>
<div class="t" style="left:283.5px;top:490.8px;font-size:9px">Corporate name</div>
<div class="inp" style="left:625px;top:482.6px;width:332px;height:24.8px"></div>
<div class="t" style="left:633.5px;top:490.8px;font-size:9px">Mission</div>
<svg class="abs" style="left:976px;top:482.3px" width="12" height="12" viewBox="0 0 12 12"><line x1="1.3" y1="5.5" x2="10.2" y2="5.5" stroke="#959595" stroke-width="0.9"/><line x1="5.8" y1="1" x2="5.8" y2="9.9" stroke="#959595" stroke-width="0.9"/></svg>
<div class="sep" style="left:107px;top:519.0px;width:990px"></div>
<div class="t" style="left:107px;top:530.8px;font-size:9px">Contractor</div>
<div class="inp" style="left:275px;top:529.0px;width:331px;height:24.8px"></div>
<div class="t" style="left:283.5px;top:537.2px;font-size:9px">Corporate name</div>
<div class="inp" style="left:625px;top:529.0px;width:332px;height:24.8px"></div>
<div class="t" style="left:633.5px;top:537.2px;font-size:9px">Mission</div>
<svg class="abs" style="left:976px;top:528.7px" width="12" height="12" viewBox="0 0 12 12"><line x1="1.3" y1="5.5" x2="10.2" y2="5.5" stroke="#959595" stroke-width="0.9"/><line x1="5.8" y1="1" x2="5.8" y2="9.9" stroke="#959595" stroke-width="0.9"/></svg>
<div class="sep" style="left:107px;top:565.4px;width:990px"></div>
<div class="t" style="left:107px;top:577.2px;font-size:9px">Subcontractor</div>
<div class="inp" style="left:275px;top:575.4px;width:331px;height:24.8px"></div>
<div class="t" style="left:283.5px;top:583.6px;font-size:9px">Corporate name</div>
<div class="inp" style="left:625px;top:575.4px;width:332px;height:24.8px"></div>
<div class="t" style="left:633.5px;top:583.6px;font-size:9px">Mission</div>
<svg class="abs" style="left:976px;top:575.1px" width="12" height="12" viewBox="0 0 12 12"><line x1="1.3" y1="5.5" x2="10.2" y2="5.5" stroke="#959595" stroke-width="0.9"/><line x1="5.8" y1="1" x2="5.8" y2="9.9" stroke="#959595" stroke-width="0.9"/></svg>
<div class="sep" style="left:107px;top:611.8px;width:990px"></div>
<div class="t" style="left:107px;top:623.6px;font-size:9px">Supplier</div>
<div class="inp" style="left:275px;top:621.8px;width:331px;height:24.8px"></div>
<div class="t" style="left:283.5px;top:630.0px;font-size:9px">Corporate name</div>
<div class="inp" style="left:625px;top:621.8px;width:332px;height:24.8px"></div>
<div class="t" style="left:633.5px;top:630.0px;font-size:9px">Mission</div>
<svg class="abs" style="left:976px;top:621.5px" width="12" height="12" viewBox="0 0 12 12"><line x1="1.3" y1="5.5" x2="10.2" y2="5.5" stroke="#959595" stroke-width="0.9"/><line x1="5.8" y1="1" x2="5.8" y2="9.9" stroke="#959595" stroke-width="0.9"/></svg>
<div class="sep" style="left:107px;top:658.2px;width:990px"></div>

<!-- footer -->
<div id="footer" class="abs"></div>
<div class="t" style="left:8.5px;top:597px;font-size:12.5px;color:#222">@ 2020 Construction Network</div>
<div class="t" style="left:1059px;top:600px;font-size:8.8px;color:#222">Terms Conditions</div>
<div class="abs" style="left:1132px;top:598px;width:1px;height:11px;background:#333"></div>
<div class="t" style="left:1137.5px;top:600px;font-size:8.7px;color:#222">Privacy Policy</div>
</body></html>
